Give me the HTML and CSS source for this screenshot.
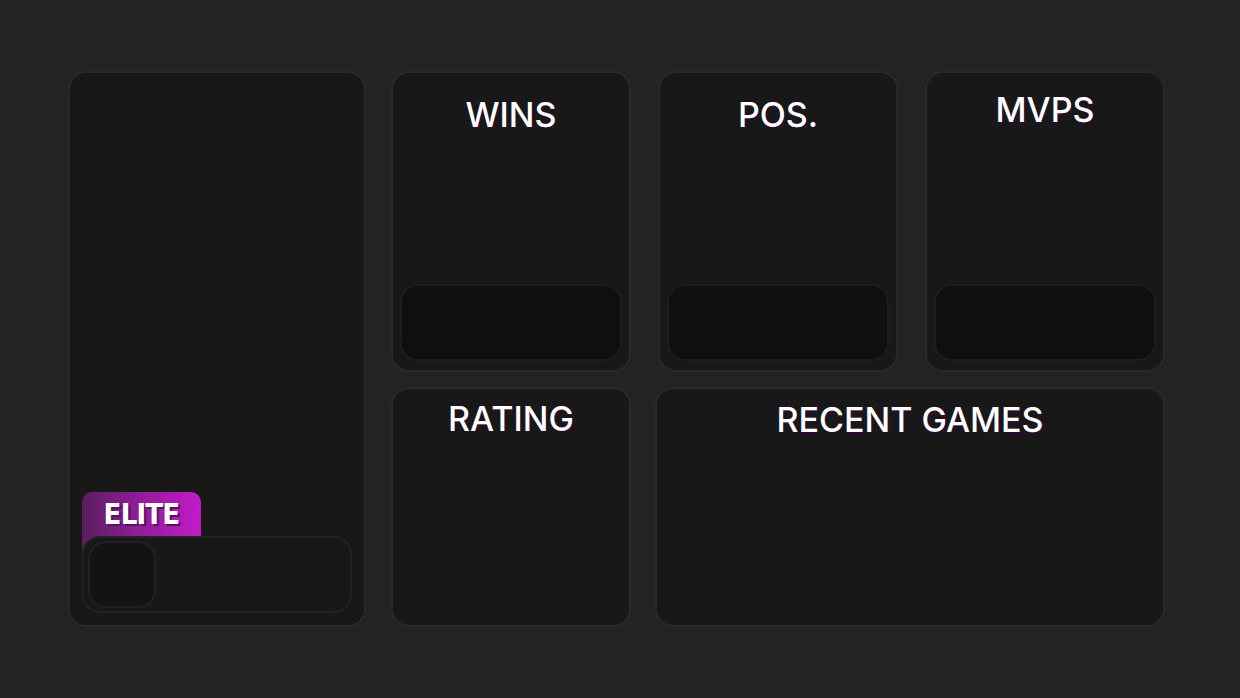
FILE: index.html
```html
<!DOCTYPE html>
<html lang="en">
<head>
<meta charset="utf-8">
<title>Profile</title>
<link rel="stylesheet" href="styles.css">
</head>
<body>
<main class="board">
  <section class="card player">
    <div class="profile-wrap">
      <div class="badge"><span class="badge-text">ELITE</span></div>
      <div class="profile">
        <div class="avatar"></div>
      </div>
    </div>
  </section>
  <div class="stats">
    <div class="row row-top">
      <section class="card stat">
        <h2 class="title t-wins">WINS</h2>
        <div class="value-box"></div>
      </section>
      <section class="card stat">
        <h2 class="title t-pos">POS.</h2>
        <div class="value-box"></div>
      </section>
      <section class="card stat">
        <h2 class="title t-mvps">MVPS</h2>
        <div class="value-box"></div>
      </section>
    </div>
    <div class="row row-bottom">
      <section class="card rating">
        <h2 class="title t-rating">RATING</h2>
      </section>
      <section class="card recent">
        <h2 class="title t-recent">RECENT GAMES</h2>
      </section>
    </div>
  </div>
</main>
</body>
</html>
```

FILE: styles.css
```css
* { box-sizing: border-box; }

html, body {
  margin: 0;
  padding: 0;
  background: #232323;
  width: 1240px;
  height: 698px;
  overflow: hidden;
  font-family: "Inter", "Noto Sans", sans-serif;
}

.board {
  display: flex;
  gap: 25px;
  padding: 71px 0 0 68px;
}

.card {
  background: #181818;
  border: 2px solid #292929;
  border-radius: 18px;
}

.player {
  width: 298px;
  height: 556px;
  display: flex;
  flex-direction: column;
  justify-content: flex-end;
  padding: 0 12px 12px;
}

.profile-wrap {
  position: relative;
}

.badge {
  position: absolute;
  left: 0;
  top: -44px;
  width: 119px;
  height: 60px;
  border-radius: 10px 10px 0 0;
  background: linear-gradient(90deg, #5a1f5c 0%, #8e1d95 45%, #c21ac8 100%);
  text-align: center;
}

.badge-text {
  display: block;
  height: 44px;
  line-height: 45px;
  font-family: "DejaVu Sans Condensed", "DejaVu Sans", sans-serif;
  font-stretch: condensed;
  font-weight: 700;
  font-size: 29px;
  letter-spacing: -0.8px;
  color: #ffffff;
  text-shadow: 2px 2px 0 #521558;
}

.profile {
  position: relative;
  z-index: 1;
  height: 77px;
  background: #181818;
  border: 2px solid #222222;
  border-radius: 18px;
  padding: 3px 4px;
}

.avatar {
  width: 68px;
  height: 67px;
  background: #131316;
  border: 2px solid #212123;
  border-radius: 18px;
}

.stats {
  display: flex;
  flex-direction: column;
  gap: 15px;
}

.row {
  display: flex;
}

.row-top { gap: 27px; }
.row-bottom { gap: 24px; }

.stat {
  width: 240px;
  height: 301px;
  display: flex;
  flex-direction: column;
  padding: 0 7px 9px;
}

.rating {
  width: 240px;
  height: 240px;
}

.recent {
  width: 510px;
  height: 240px;
}

.title {
  margin: 0;
  font-size: 34px;
  line-height: 40px;
  font-weight: 500;
  color: #ffffff;
  text-align: center;
  text-shadow: 1px 2px 0 #2d0b36;
}

.t-wins, .t-pos { padding-top: 22px; }
.t-mvps { padding-top: 17px; }
.t-rating { padding-top: 10px; }
.t-recent { padding-top: 11px; }

.value-box {
  margin-top: auto;
  height: 77px;
  background: #0f0f0f;
  border: 2px solid #1d1d1d;
  border-radius: 18px;
}
```
